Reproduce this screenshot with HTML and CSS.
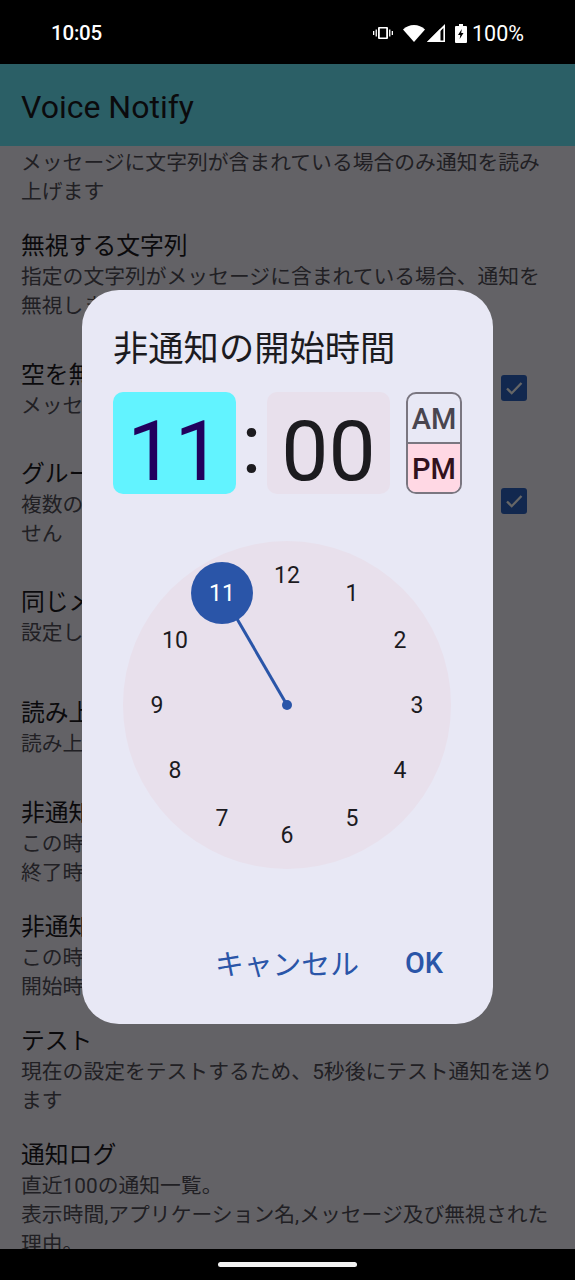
FILE: index.html
```html
<!DOCTYPE html>
<html lang="ja">
<head>
<meta charset="utf-8">
<title>Voice Notify</title>
<link rel="stylesheet" href="styles.css">
</head>
<body>
<div class="phone">
  <header class="status">
    <span class="clock-text">10:05</span>
    <div class="status-right">
      <svg class="ic-vib" viewBox="0 0 20 14"><path d="M6 1h8a1 1 0 0 1 1 1v10a1 1 0 0 1-1 1H6a1 1 0 0 1-1-1V2a1 1 0 0 1 1-1zm.8 1.6v8.8h6.400V2.600z" fill="#fff" fill-rule="evenodd"/><path d="M2.600 3.500h1.300v7H2.600zM16.100 3.500h1.300v7h-1.300zM0 5h1.300v4H0zM18.700 5H20v4h-1.300z" fill="#fff"/></svg>
      <svg class="ic-wifi" viewBox="0 0 22 17"><path d="M11 17 0 4.500C3 1.700 6.800 0 11 0s8 1.700 11 4.500z" fill="#fff"/></svg>
      <svg class="ic-sig" viewBox="0 0 18 18"><path d="M18 0v18H0zM16.400 4l-12.500 12.500h12.500z" fill="#fff" fill-rule="evenodd"/><path d="M0 18 13.500 4.500V18z" fill="#fff"/></svg>
      <svg class="ic-bat" viewBox="0 0 12 19"><path d="M4 0h4v2h3a1 1 0 0 1 1 1v15a1 1 0 0 1-1 1H1a1 1 0 0 1-1-1V3a1 1 0 0 1 1-1h3zM6.800 5 3 11h2.300l-.6 4 3.800-6H6.200z" fill="#fff" fill-rule="evenodd"/></svg>
      <span class="pct">100%</span>
    </div>
  </header>

  <div class="content">
    <div class="appbar"><h1 class="app-title">Voice Notify</h1></div>
    <main class="scroller">
      <div class="list">
        <section class="item">
          <p class="item-sub">メッセージに文字列が含まれている場合のみ通知を読み上げます</p>
        </section>
        <section class="item item-before-check">
          <h2 class="item-title">無視する文字列</h2>
          <p class="item-sub">指定の文字列がメッセージに含まれている場合、通知を無視します</p>
        </section>
        <section class="item item-check item-check-first">
          <div class="item-text">
            <h2 class="item-title">空を無視</h2>
            <p class="item-sub">メッセージが空の場合は読み上げません</p>
          </div>
          <span class="checkbox"><svg viewBox="0 0 26 26"><path d="M6 13.500l4.700 4.700L20.500 8" fill="none" stroke="#fff" stroke-width="2.300"/></svg></span>
        </section>
        <section class="item item-check">
          <div class="item-text">
            <h2 class="item-title">グループ通知を無視</h2>
            <p class="item-sub">複数の通知をまとめたグループは読み上げま<br>せん</p>
          </div>
          <span class="checkbox"><svg viewBox="0 0 26 26"><path d="M6 13.500l4.700 4.700L20.500 8" fill="none" stroke="#fff" stroke-width="2.300"/></svg></span>
        </section>
        <section class="item item-tall">
          <h2 class="item-title">同じメッセージを無視</h2>
          <p class="item-sub">設定した時間内は同じメッセージを無視します</p>
        </section>
        <section class="item item-mid">
          <h2 class="item-title">読み上げ設定</h2>
          <p class="item-sub">読み上げエンジンの設定を開きます</p>
        </section>
        <section class="item">
          <h2 class="item-title">非通知の開始時間</h2>
          <p class="item-sub">この時間から通知を読み上げません。<br>終了時間と同じ場合は無効です</p>
        </section>
        <section class="item">
          <h2 class="item-title">非通知の終了時間</h2>
          <p class="item-sub">この時間まで通知を読み上げません。<br>開始時間と同じ場合は無効です</p>
        </section>
        <section class="item">
          <h2 class="item-title">テスト</h2>
          <p class="item-sub">現在の設定をテストするため、5秒後にテスト通知を送ります</p>
        </section>
        <section class="item">
          <h2 class="item-title">通知ログ</h2>
          <p class="item-sub">直近100の通知一覧。<br>表示時間,アプリケーション名,メッセージ及び無視された理由。</p>
        </section>
      </div>
    </main>

    <div class="scrim">
      <div class="dialog">
        <h2 class="dialog-title">非通知の開始時間</h2>
        <div class="time-row">
          <div class="time-box time-hour">11</div>
          <div class="time-colon">:</div>
          <div class="time-box time-min">00</div>
          <div class="ampm">
            <div class="ampm-cell">AM</div>
            <div class="ampm-cell ampm-on">PM</div>
          </div>
        </div>
        <svg class="dial" viewBox="0 0 328 328">
          <circle cx="164" cy="164" r="164" fill="#e8e0ec"/>
          <line x1="164" y1="164" x2="99" y2="52" stroke="#2a55a8" stroke-width="3"/>
          <circle cx="164" cy="164" r="5" fill="#2a55a8"/>
          <circle cx="99" cy="52" r="31" fill="#2a55a8"/>
          <g class="dial-nums">
            <text x="164" y="34">12</text>
            <text x="229" y="52">1</text>
            <text x="277" y="99">2</text>
            <text x="294" y="164">3</text>
            <text x="277" y="229">4</text>
            <text x="229" y="277">5</text>
            <text x="164" y="294">6</text>
            <text x="99" y="277">7</text>
            <text x="52" y="229">8</text>
            <text x="34" y="164">9</text>
            <text x="52" y="99">10</text>
            <text class="dial-sel" x="99" y="52">11</text>
          </g>
        </svg>
        <div class="actions">
          <span class="action-cancel">キャンセル</span>
          <span class="action-ok">OK</span>
        </div>
      </div>
    </div>
  </div>

  <footer class="navbar"><span class="pill"></span></footer>
</div>
</body>
</html>
```

FILE: styles.css
```css
* { box-sizing: border-box; }
html, body { margin: 0; padding: 0; background: #000; }
body { font-family: Roboto, "Noto Sans CJK JP", sans-serif; }

.phone {
  width: 575px;
  height: 1280px;
  display: flex;
  flex-direction: column;
  overflow: hidden;
  background: #000;
}

/* status bar */
.status {
  height: 64px;
  flex: none;
  display: flex;
  align-items: center;
  justify-content: space-between;
  padding: 2px 51px 0 51px;
  color: #fff;
  font-size: 20.500px;
}
.clock-text { font-weight: 500; letter-spacing: -0.2px; }
.status-right { display: flex; align-items: center; }
.ic-vib { width: 20px; height: 14px; margin-right: 10px; }
.ic-wifi { width: 22px; height: 17px; margin-right: 2px; }
.ic-sig { width: 18px; height: 18px; margin-right: 10px; }
.ic-bat { width: 12px; height: 19px; margin-right: 5px; }
.pct { font-size: 21.500px; }

/* app content */
.content {
  flex: 1;
  min-height: 0;
  position: relative;
  display: flex;
  flex-direction: column;
  background: #f8f5ff;
}
.appbar {
  height: 82px;
  flex: none;
  background: #6cedff;
  display: flex;
  align-items: center;
  padding: 3px 21px 0;
}
.app-title {
  margin: 0;
  font-size: 32px;
  font-weight: 400;
  color: #1c1b1f;
}
.scroller { flex: 1; min-height: 0; overflow: hidden; }
.list { padding: 1.500px 21px 0; }

.item { padding-bottom: 23px; }
.item-title {
  margin: 0;
  font-size: 23.800px;
  line-height: 32px;
  font-weight: 400;
  color: #1c1b1f;
}
.item-sub {
  margin: 1px 0 0;
  font-size: 20.800px;
  line-height: 29px;
  color: #54515a;
}
.item-before-check { padding-bottom: 38px; }
.item-check {
  display: flex;
  align-items: center;
  justify-content: space-between;
  padding-right: 27px;
  padding-bottom: 37px;
}
.item-check-first { padding-bottom: 37px; }
.item-tall { padding-bottom: 49px; }
.item-mid { padding-bottom: 38px; }
.item-text { min-width: 0; }
.checkbox {
  width: 26px;
  height: 26px;
  flex: none;
  display: block;
  margin-bottom: 4px;
  border-radius: 3px;
  background: #2d64c5;
}
.checkbox svg { width: 26px; height: 26px; display: block; }

/* dialog */
.scrim {
  position: absolute;
  inset: 0;
  display: flex;
  align-items: center;
  justify-content: center;
  background: rgba(0, 0, 0, 0.6);
}
.dialog {
  width: 411px;
  height: 734px;
  border-radius: 37px;
  background: #e8e8f5;
  padding: 34px 31px 0;
}
.dialog-title {
  margin: 0 0 18px;
  font-size: 35.300px;
  line-height: 50px;
  font-weight: 400;
  color: #1c1b1f;
}
.time-row { display: flex; height: 102px; }
.time-box {
  width: 123px;
  height: 102px;
  border-radius: 10px;
  display: flex;
  align-items: center;
  justify-content: center;
  padding-top: 18px;
  font-size: 84px;
  line-height: 84px;
}
.time-hour { background: #62f3ff; color: #21005d; }
.time-min { background: #e8e0ec; color: #1c1b1f; }
.time-colon {
  width: 31px;
  text-align: center;
  font-size: 84px;
  line-height: 106px;
  color: #1c1b1f;
}
.ampm {
  width: 56px;
  height: 102px;
  margin-left: 16px;
  border: 2px solid #7a7680;
  border-radius: 10px;
  overflow: hidden;
  display: flex;
  flex-direction: column;
}
.ampm-cell {
  flex: 1;
  display: flex;
  align-items: center;
  justify-content: center;
  padding-top: 2px;
  font-size: 29px;
  font-weight: 500;
  color: #49454f;
}
.ampm-on {
  background: #ffd8e4;
  color: #31111d;
  border-top: 2px solid #7a7680;
}

.dial {
  display: block;
  width: 328px;
  height: 328px;
  margin: 47px 0 0 10px;
}
.dial-nums text {
  font-family: Roboto, sans-serif;
  font-size: 23px;
  fill: #1c1b1f;
  text-anchor: middle;
  dominant-baseline: central;
}
.dial-nums .dial-sel { fill: #fff; }

.actions {
  display: flex;
  justify-content: flex-end;
  align-items: center;
  gap: 46px;
  height: 40px;
  margin-top: 74px;
  padding-right: 19px;
  color: #2a55a8;
  font-size: 28.800px;
}
.action-cancel { font-weight: 400; }
.action-ok { font-weight: 500; }

/* nav bar */
.navbar {
  height: 31px;
  flex: none;
  background: #000;
  display: flex;
  justify-content: center;
  padding-top: 13px;
}
.pill {
  width: 139px;
  height: 5px;
  border-radius: 3px;
  background: #f2f2f2;
}
```
